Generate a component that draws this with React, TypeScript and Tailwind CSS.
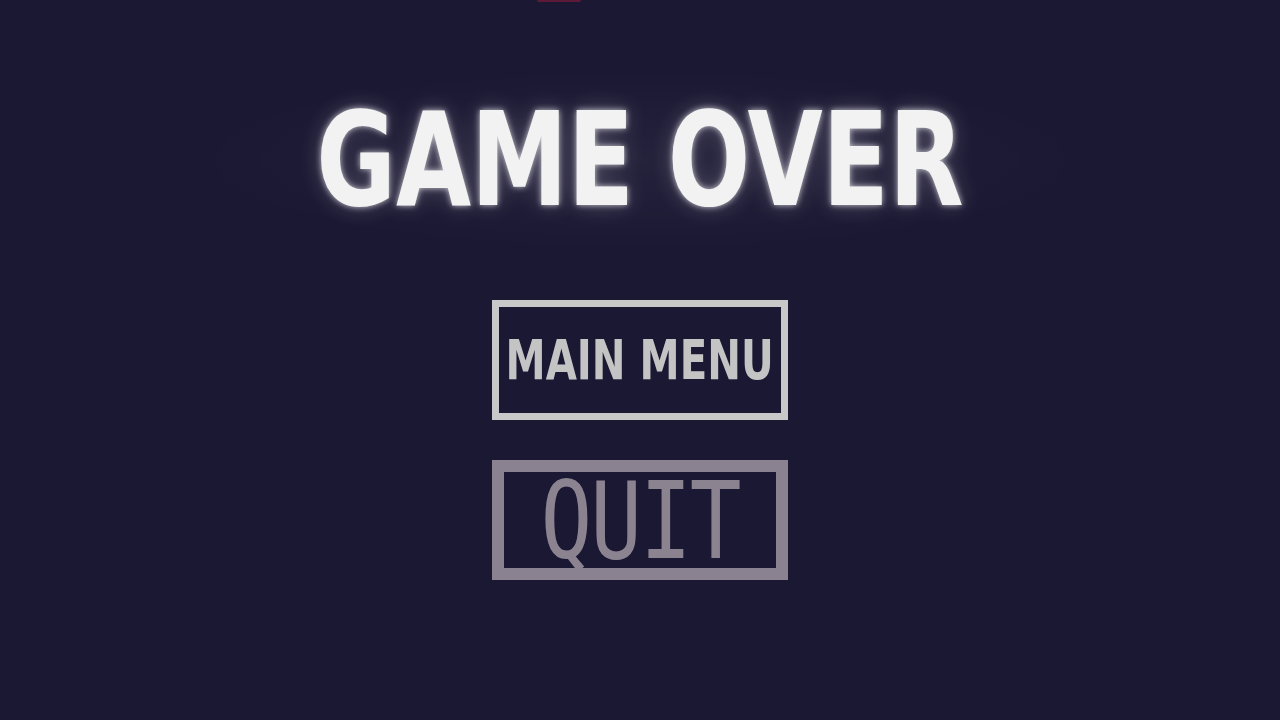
import React from 'react';

const titleFont = { fontFamily: '"DejaVu Sans Condensed", "DejaVu Sans", sans-serif' };

export default function App() {
    return (
        <div className="relative w-full h-[720px] overflow-hidden bg-[#1b1833] flex flex-col items-center">
            {/* clipped red bar peeking from the top */}
            <div className="absolute top-0 left-[537px] w-[44px] h-[2px] bg-[#5c1a38] rounded-b-sm" />

            {/* Title */}
            <div className="mt-[61px] px-24 py-6 bg-[radial-gradient(ellipse_at_center,rgba(255,255,255,0.045),rgba(255,255,255,0)_65%)]">
                <h1
                    style={titleFont}
                    className="text-[130px] font-bold leading-[150px] whitespace-nowrap text-[#f2f2f2] scale-x-[0.83] [text-shadow:0_0_7px_rgba(255,255,255,0.75),0_0_26px_rgba(255,255,255,0.22)]"
                >
                    GAME OVER
                </h1>
            </div>

            {/* Buttons */}
            <div className="mt-[41px] flex flex-col gap-10">
                <button className="w-[296px] h-[120px] border-[7px] border-[#c8c8c8] flex items-center justify-center">
                    <span
                        style={titleFont}
                        className="inline-block text-[56px] font-bold whitespace-nowrap text-[#c4c4c4] leading-none scale-x-[0.8]"
                    >
                        MAIN MENU
                    </span>
                </button>
                <button className="w-[296px] h-[120px] border-[12px] border-[#8a8291] flex items-center justify-center">
                    <span
                        style={{ fontFamily: '"DejaVu Sans Mono", "Liberation Mono", monospace' }}
                        className="inline-block text-[86px] leading-none text-[#8b8490] tracking-[-2px] scale-y-[1.25]"
                    >
                        QUIT
                    </span>
                </button>
            </div>
        </div>
    );
}
